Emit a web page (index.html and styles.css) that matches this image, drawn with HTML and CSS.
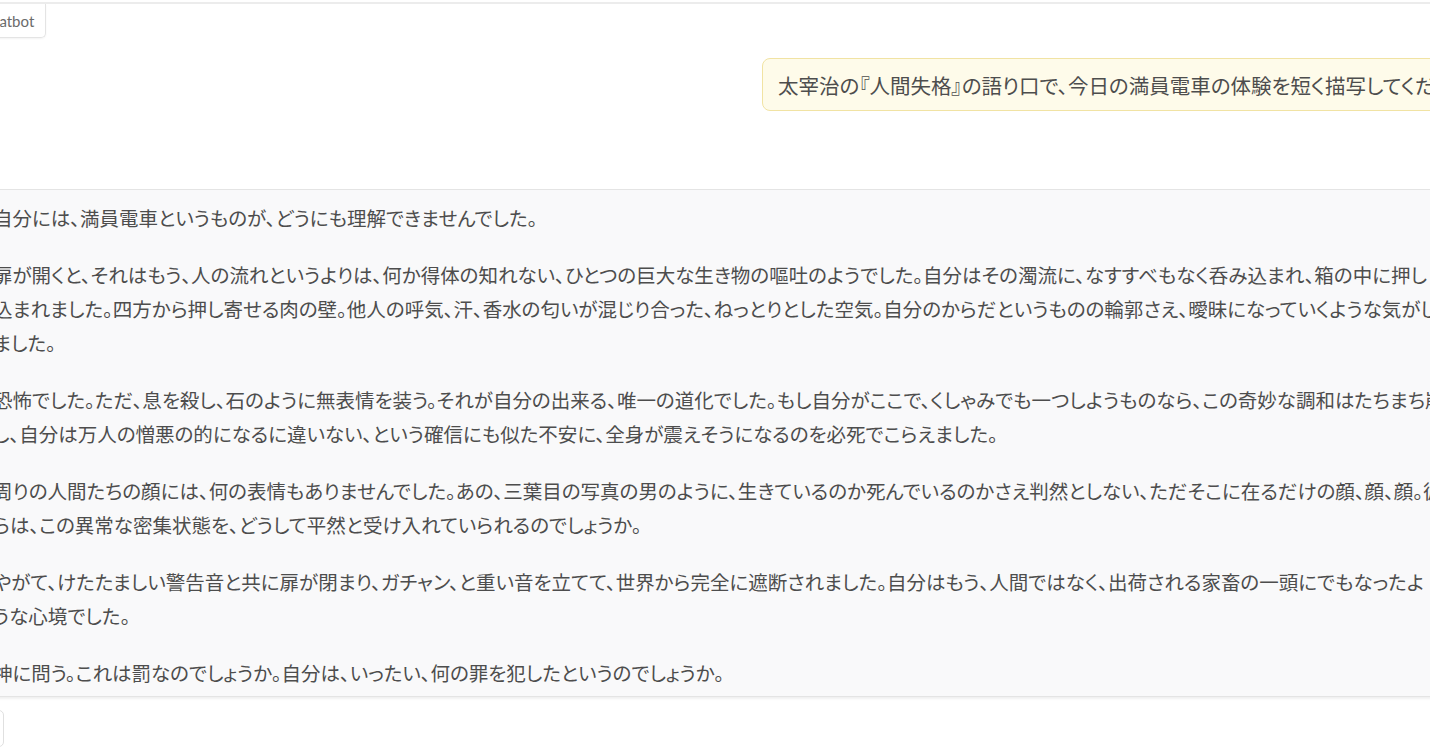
FILE: index.html
```html
<!DOCTYPE html>
<html lang="ja">
<head>
<meta charset="utf-8">
<title>Chatbot</title>
<link rel="stylesheet" href="styles.css">
</head>
<body>
<div class="page">
  <div class="block">
    <div class="label">Chatbot</div>
    <div class="user-row">
      <div class="bubble">太宰治の『人間失格』の語り口で、今日の満員電車の体験を短く描写してください。</div>
    </div>
    <div class="bot">
      <p>自分には、満員電車というものが、どうにも理解できませんでした。</p>
      <p>扉が開くと、それはもう、人の流れというよりは、何か得体の知れない、ひとつの巨大な生き物の嘔吐のようでした。自分はその濁流に、なすすべもなく呑み込まれ、箱の中に押し<br>込まれました。四方から押し寄せる肉の壁。他人の呼気、汗、香水の匂いが混じり合った、ねっとりとした空気。自分のからだというものの輪郭さえ、曖昧になっていくような気がし<br>ました。</p>
      <p>恐怖でした。ただ、息を殺し、石のように無表情を装う。それが自分の出来る、唯一の道化でした。もし自分がここで、くしゃみでも一つしようものなら、この奇妙な調和はたちまち崩壊<br>し、自分は万人の憎悪の的になるに違いない、という確信にも似た不安に、全身が震えそうになるのを必死でこらえました。</p>
      <p>周りの人間たちの顔には、何の表情もありませんでした。あの、三葉目の写真の男のように、生きているのか死んでいるのかさえ判然としない、ただそこに在るだけの顔、顔、顔。彼<br>らは、この異常な密集状態を、どうして平然と受け入れていられるのでしょうか。</p>
      <p>やがて、けたたましい警告音と共に扉が閉まり、ガチャン、と重い音を立てて、世界から完全に遮断されました。自分はもう、人間ではなく、出荷される家畜の一頭にでもなったよ<br>うな心境でした。</p>
      <p>神に問う。これは罰なのでしょうか。自分は、いったい、何の罪を犯したというのでしょうか。</p>
    </div>
    <div class="tools">
      <div class="tool-btn"></div>
    </div>
  </div>
</div>
</body>
</html>
```

FILE: styles.css
```css
html, body {
  margin: 0;
  padding: 0;
  background: #ffffff;
  overflow: hidden;
  width: 1430px;
  height: 749px;
}

.page {
  margin-left: -28px;
  width: 1800px;
}

.block {
  margin-top: 2px;
  border-top: 2px solid #ececec;
  display: flex;
  flex-direction: column;
  align-items: flex-start;
}

.label {
  height: 33px;
  display: flex;
  align-items: center;
  padding: 0 11px 0 8px;
  border: 1px solid #e4e4e4;
  border-top: none;
  border-radius: 0 0 5px 0;
  box-shadow: 0 1px 2px rgba(0, 0, 0, 0.05);
  font-family: Lato, "Liberation Sans", sans-serif;
  font-size: 15px;
  color: #6b6b6b;
}

.user-row {
  display: flex;
  padding-left: 790px;
  margin-top: 20px;
}

.bubble {
  height: 51px;
  display: flex;
  align-items: center;
  padding: 0 15px;
  background: #fefbea;
  border: 1px solid #f1e3a3;
  border-radius: 8px;
  white-space: nowrap;
  font-family: "Noto Sans CJK JP", sans-serif;
  font-feature-settings: "palt" 1;
  font-size: 20.5px;
  color: #4d4d4d;
}

.bot {
  align-self: stretch;
  margin-top: 78px;
  padding: 11px 0 6px 20px;
  background: #f9f9fa;
  border: 1px solid #e4e4e4;
  box-shadow: 0 2px 2px rgba(0, 0, 0, 0.06);
  font-family: "Noto Sans CJK JP", sans-serif;
  font-feature-settings: "palt" 1;
  font-size: 19.5px;
  line-height: 34px;
  color: #4d4d4d;
}

.bot p {
  margin: 0 0 23px 0;
  white-space: nowrap;
}

.bot p:last-child {
  margin-bottom: 0;
}

.tools {
  display: flex;
  margin-top: 13px;
}

.tool-btn {
  width: 30px;
  height: 35px;
  border: 1px solid #e0e0e0;
  border-radius: 5px;
}
```
